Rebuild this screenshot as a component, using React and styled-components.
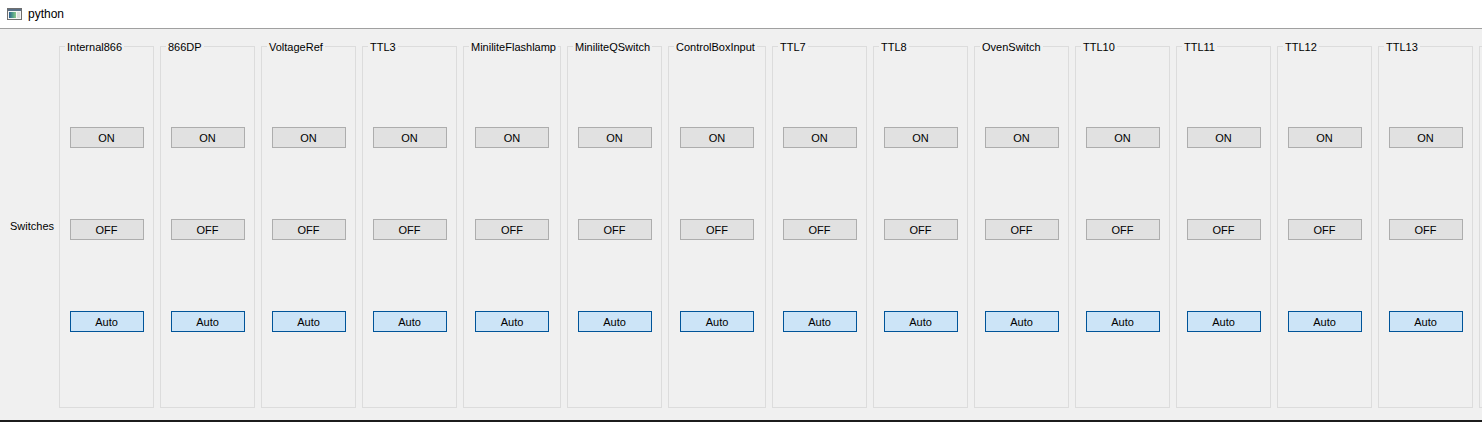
import React from "react";
import styled, { createGlobalStyle } from "styled-components";

const GlobalStyle = createGlobalStyle`
  html, body {
    margin: 0;
    padding: 0;
    background: #f0f0f0;
  }
  body {
    font-family: "Liberation Sans", Arial, sans-serif;
    font-size: 11px;
    color: #000;
  }
`;

const Window = styled.div`
  width: 1482px;
  height: 422px;
  display: flex;
  flex-direction: column;
  overflow: hidden;
  background: #f0f0f0;
`;

const TitleBar = styled.div`
  height: 28px;
  flex-shrink: 0;
  background: #ffffff;
  border-bottom: 1px solid #a0a0a0;
  display: flex;
  align-items: center;
  padding-left: 7px;
  gap: 6px;
`;

const TitleText = styled.span`
  font-family: "Liberation Sans", Arial, sans-serif;
  font-size: 12px;
  color: #000;
  margin-top: -1px;
`;

const Content = styled.div`
  flex: 1;
  display: flex;
  align-items: flex-start;
  padding-top: 10px;
  padding-bottom: 12px;
  overflow: hidden;
  min-height: 0;
`;

const SideLabel = styled.div`
  width: 59px;
  flex-shrink: 0;
  box-sizing: border-box;
  padding-left: 10px;
  height: 369px;
  display: flex;
  align-items: center;
  padding-top: 4px;
  white-space: nowrap;
`;

const Group = styled.fieldset`
  margin: 0 6px 0 0;
  padding: 0;
  border: 1px solid #dcdcdc;
  width: ${(p) => (p.$wide ? 98 : 95)}px;
  min-width: 0;
  height: 369px;
  box-sizing: border-box;
  flex-shrink: 0;
  display: flex;
  flex-direction: column;
  align-items: center;
`;

const EdgeGroup = styled.div`
  margin-top: 7px;
  width: 95px;
  height: 362px;
  box-sizing: border-box;
  flex-shrink: 0;
  border: 1px solid #dcdcdc;
`;

const Legend = styled.legend`
  margin-left: 5px;
  padding: 0 2px;
  font-size: 11px;
  line-height: 14px;
  white-space: nowrap;
  position: relative;
  top: 1px;
`;

const SwitchButton = styled.button`
  width: 74px;
  height: 21px;
  flex-shrink: 0;
  margin-top: ${(p) => p.$top}px;
  padding: 0;
  box-sizing: border-box;
  font-family: "Liberation Sans", Arial, sans-serif;
  font-size: 11px;
  color: #000;
  background: ${(p) => (p.$primary ? "#cce4f7" : "#e1e1e1")};
  border: 1px solid ${(p) => (p.$primary ? "#005499" : "#adadad")};
  border-radius: 0;
  outline: none;
`;

const BottomEdge = styled.div`
  height: 2px;
  flex-shrink: 0;
  background: #1c1c1c;
`;

const AppIcon = () => (
  <svg width="15" height="12" viewBox="0 0 15 12">
    <defs>
      <linearGradient id="ig" x1="0" y1="0" x2="1" y2="0">
        <stop offset="0" stopColor="#2f5f8f" />
        <stop offset="0.5" stopColor="#4f9a8a" />
        <stop offset="1" stopColor="#8cc98a" />
      </linearGradient>
    </defs>
    <rect x="0.5" y="0.5" width="14" height="11" fill="#f4f4f4" stroke="#6e6e6e" />
    <rect x="1" y="1" width="13" height="2" fill="#5a6f86" />
    <rect x="2" y="4" width="7" height="6" fill="url(#ig)" />
    <rect x="10" y="4" width="3" height="6" fill="#dcdcdc" />
  </svg>
);

const channels = [
  { name: "Internal866" },
  { name: "866DP" },
  { name: "VoltageRef" },
  { name: "TTL3" },
  { name: "MiniliteFlashlamp", wide: true },
  { name: "MiniliteQSwitch" },
  { name: "ControlBoxInput", wide: true },
  { name: "TTL7" },
  { name: "TTL8" },
  { name: "OvenSwitch" },
  { name: "TTL10" },
  { name: "TTL11" },
  { name: "TTL12" },
  { name: "TTL13" },
];

export default function App() {
  return (
    <>
      <GlobalStyle />
      <Window>
        <TitleBar>
          <AppIcon />
          <TitleText>python</TitleText>
        </TitleBar>
        <Content>
          <SideLabel>Switches</SideLabel>
          {channels.map((c) => (
            <Group key={c.name} $wide={c.wide}>
              <Legend>{c.name}</Legend>
              <SwitchButton $top={74}>ON</SwitchButton>
              <SwitchButton $top={71}>OFF</SwitchButton>
              <SwitchButton $top={71} $primary>
                Auto
              </SwitchButton>
            </Group>
          ))}
          <EdgeGroup />
        </Content>
        <BottomEdge />
      </Window>
    </>
  );
}
